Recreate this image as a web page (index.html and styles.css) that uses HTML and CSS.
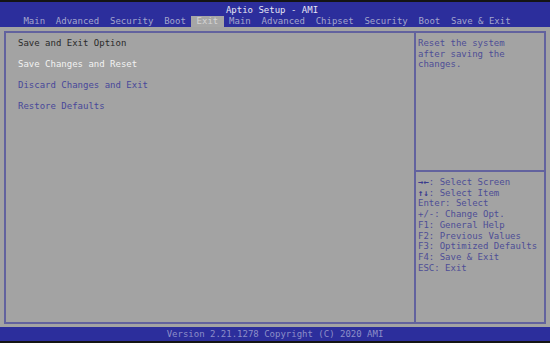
FILE: index.html
```html
<!DOCTYPE html>
<html lang="en">
<head>
    <meta charset="UTF-8">
    <meta name="viewport" content="width=device-width, initial-scale=1.0">
    <title>Aptio Setup - AMI</title>
    <link rel="stylesheet" href="styles.css">
</head>
<body>

<div class="top">
    <div class="title">Aptio Setup - AMI</div>
    <div class="tabs">
        <span class="tab">Main</span>
        <span class="tab">Advanced</span>
        <span class="tab">Security</span>
        <span class="tab">Boot</span>
        <span class="tab active">Exit</span>
        <span class="tab">Main</span>
        <span class="tab">Advanced</span>
        <span class="tab">Chipset</span>
        <span class="tab">Security</span>
        <span class="tab">Boot</span>
        <span class="tab">Save &amp; Exit</span>
    </div>
</div>

<div class="main">
    <div class="box">
        <div class="menu">
            <div class="heading">Save and Exit Option</div>
            <div class="item selected">Save Changes and Reset</div>
            <div class="item">Discard Changes and Exit</div>
            <div class="item">Restore Defaults</div>
        </div>
        <div class="side">
            <div class="help">Reset the system<br>after saving the<br>changes.</div>
            <div class="keys">
                <div class="key"><b>&rarr;&larr;</b>: Select Screen</div>
                <div class="key"><b>&uarr;&darr;</b>: Select Item</div>
                <div class="key">Enter: Select</div>
                <div class="key">+/-: Change Opt.</div>
                <div class="key">F1: General Help</div>
                <div class="key">F2: Previous Values</div>
                <div class="key">F3: Optimized Defaults</div>
                <div class="key">F4: Save &amp; Exit</div>
                <div class="key">ESC: Exit</div>
            </div>
        </div>
    </div>
</div>

<div class="footer">Version 2.21.1278 Copyright (C) 2020 AMI</div>

</body>
</html>
```

FILE: styles.css
```css
body {
    margin: 0;
    width: 550px;
    height: 343px;
    background-color: #a3a3a3;
    font-family: "DejaVu Sans Mono", "Liberation Mono", monospace;
    font-size: 9px;
    overflow: hidden;
}

.top {
    height: 25px;
    border-top: 2px solid #141414;
    background-color: #2c2e9c;
}

.title {
    height: 12px;
    padding-top: 2px;
    padding-right: 6px;
    line-height: 12px;
    text-align: center;
    color: #e6e6f4;
}

.tabs {
    display: flex;
    height: 11px;
    padding-left: 18px;
    line-height: 11px;
    white-space: pre;
}

.tab {
    padding: 0 5.4px;
    color: #a4a6cc;
}

.tab.active {
    background-color: #a6a6a6;
    color: #d4d4d4;
}

.main {
    padding: 4px 4px 3px;
}

.box {
    display: flex;
    height: 289px;
    border: 2px solid #62629e;
}

.menu {
    width: 396px;
    padding-left: 12px;
    line-height: 21px;
}

.heading {
    color: #2a2a2a;
}

.item {
    color: #48489a;
}

.item.selected {
    color: #f2f2f2;
}

.side {
    flex: 1;
    display: flex;
    flex-direction: column;
    border-left: 2px solid #62629e;
    color: #4e4e96;
    line-height: 10.7px;
}

.help {
    height: 132px;
    padding: 5px 0 0 2px;
    border-bottom: 2px solid #62629e;
}

.keys {
    padding: 5px 0 0 2px;
}

.key {
    white-space: pre;
}

.key b {
    color: #3a3a8e;
}

.footer {
    height: 14px;
    border-bottom: 2px solid #141414;
    background-color: #2c2e9c;
    line-height: 14px;
    text-align: center;
    color: #8c8ec8;
}
```
